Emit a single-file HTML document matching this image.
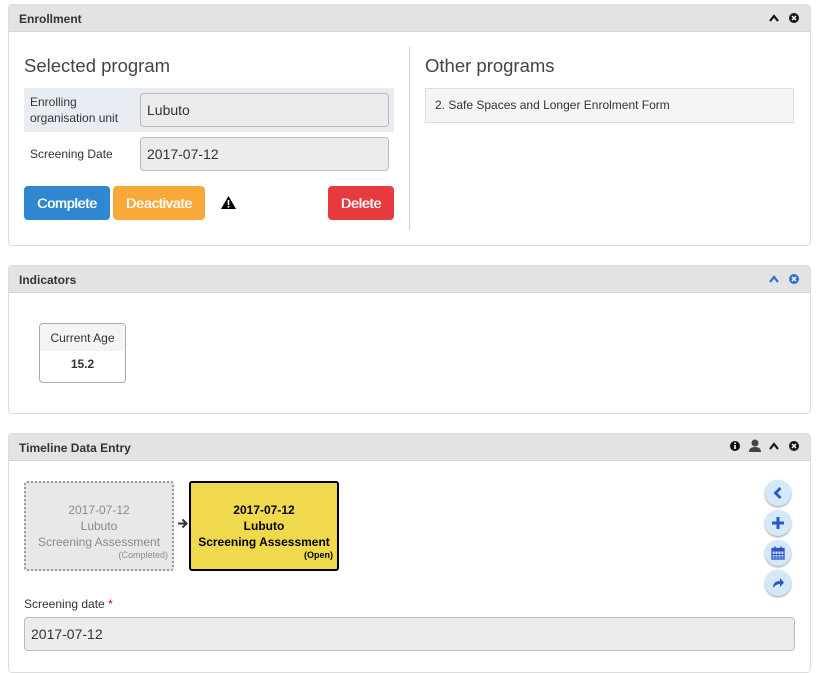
<!DOCTYPE html>
<html><head><style>
*{box-sizing:border-box;margin:0;padding:0}
body{width:824px;height:658px;overflow:hidden;background:#fff;font-family:"Liberation Sans",sans-serif;color:#333;position:relative}
.p{position:absolute;left:8px;width:803px;border:1px solid #ddd;border-radius:4px;background:#fff}
.h{height:27px;background:#e3e3e3;border-bottom:1px solid #d4d4d4;font-weight:bold;font-size:12px;padding:7px 10px;color:#333}
.a{position:absolute}
.inp{position:absolute;background:#ececec;border:1px solid #bbb;border-radius:4px;font-size:14px;padding:0 6px;display:flex;align-items:center;color:#333}
.btn{position:absolute;height:34px;border-radius:4px;color:#fff;font-size:14px;display:flex;align-items:center;justify-content:center;text-shadow:0.6px 0 0 #fff}
.circ{position:absolute;left:765px;width:26px;height:26px;border-radius:50%;background:#d3e9f9;box-shadow:0 1px 2px #999;display:flex;align-items:center;justify-content:center}
</style></head><body>
<div class="p" style="top:4px;height:242px">
 <div class="h">Enrollment</div>
</div>
<svg class="a" style="left:768px;top:12px" width="32" height="12"><path d="M2 9 L6 4 L10 9" stroke="#111" stroke-width="2.2" fill="none"/><circle cx="26" cy="6" r="5" fill="#111"/><path d="M24 4 L28 8 M28 4 L24 8" stroke="#fff" stroke-width="1.5"/></svg>
<div class="a" style="left:24px;top:55px;font-size:18.5px;color:#444">Selected program</div>
<div class="a" style="left:24px;top:88px;width:370px;height:44px;background:#e8edf4"></div>
<div class="a" style="left:30px;top:94px;font-size:12px;line-height:16px">Enrolling<br>organisation unit</div>
<div class="inp" style="left:140px;top:93px;width:249px;height:34px">Lubuto</div>
<div class="a" style="left:30px;top:147px;font-size:12px">Screening Date</div>
<div class="inp" style="left:140px;top:137px;width:249px;height:34px">2017-07-12</div>
<div class="btn" style="left:24px;top:186px;width:86px;background:#2f87cf">Complete</div>
<div class="btn" style="left:113px;top:186px;width:92px;background:#f9a93a">Deactivate</div>
<svg class="a" style="left:221px;top:196px" width="15" height="13"><path d="M7.5 0 L15 13 L0 13Z" fill="#000"/><rect x="6.7" y="4" width="1.6" height="5" fill="#fff"/><rect x="6.7" y="10" width="1.6" height="1.6" fill="#fff"/></svg>
<div class="btn" style="left:328px;top:186px;width:66px;background:#e83b3f">Delete</div>
<div class="a" style="left:409px;top:47px;width:1px;height:183px;background:#ccc"></div>
<div class="a" style="left:425px;top:55px;font-size:18.5px;color:#444">Other programs</div>
<div class="a" style="left:425px;top:88px;width:369px;height:35px;background:#f5f5f5;border:1px solid #ddd;font-size:12px;padding:9px 9px">2. Safe Spaces and Longer Enrolment Form</div>

<div class="p" style="top:265px;height:149px"><div class="h">Indicators</div></div>
<svg class="a" style="left:768px;top:273px" width="32" height="12"><path d="M2 9 L6 4 L10 9" stroke="#2f6fd0" stroke-width="2.2" fill="none"/><circle cx="26" cy="6" r="5" fill="#2f6fd0"/><path d="M24 4 L28 8 M28 4 L24 8" stroke="#fff" stroke-width="1.5"/></svg>
<div class="a" style="left:39px;top:323px;width:87px;height:60px;border:1px solid #aaa;border-radius:4px;overflow:hidden">
 <div style="background:#f4f4f4;height:27px;font-size:12px;text-align:center;padding-top:7px">Current Age</div>
 <div style="font-size:12px;font-weight:bold;text-align:center;padding-top:6px">15.2</div>
</div>

<div class="p" style="top:433px;height:240px"><div class="h">Timeline Data Entry</div></div>
<svg class="a" style="left:729px;top:439px" width="72" height="14"><circle cx="6" cy="7" r="5" fill="#111"/><rect x="5.2" y="6" width="1.6" height="4" fill="#fff"/><rect x="5.2" y="3.5" width="1.6" height="1.5" fill="#fff"/><circle cx="26" cy="4" r="3.5" fill="#444"/><path d="M20 13 Q20 8 26 8 Q32 8 32 13Z" fill="#444"/><path d="M41 10 L45 5 L49 10" stroke="#111" stroke-width="2.2" fill="none"/><circle cx="65" cy="7" r="5" fill="#111"/><path d="M63 5 L67 9 M67 5 L63 9" stroke="#fff" stroke-width="1.5"/></svg>
<div class="a" style="left:24px;top:481px;width:150px;height:90px;background:#e8e8e8;border:2px dotted #999;border-radius:3px;color:#8a8a8a;font-size:12px;text-align:center;line-height:16px;padding-top:19px">2017-07-12<br>Lubuto<br>Screening Assessment<div style="text-align:right;font-size:9px;line-height:11px;padding-right:4px">(Completed)</div></div>
<svg class="a" style="left:177px;top:518px" width="12" height="11"><path d="M1 5.5 H9 M5.5 1.5 L9.5 5.5 L5.5 9.5" stroke="#333" stroke-width="2" fill="none"/></svg>
<div class="a" style="left:189px;top:481px;width:150px;height:90px;background:#f0d94d;border:2px solid #000;border-radius:3px;color:#000;font-weight:bold;font-size:12px;text-align:center;line-height:16px;padding-top:19px">2017-07-12<br>Lubuto<br>Screening Assessment<div style="text-align:right;font-size:9px;line-height:11px;padding-right:4px">(Open)</div></div>
<div class="circ" style="top:480px"><svg width="12" height="14"><path d="M8.5 2 L3.5 7 L8.5 12" stroke="#2f55c8" stroke-width="2.8" fill="none"/></svg></div>
<div class="circ" style="top:510px"><svg width="14" height="14"><path d="M7 1 V13 M1 7 H13" stroke="#2f55c8" stroke-width="3"/></svg></div>
<div class="circ" style="top:540px"><svg width="14" height="14"><rect x="1" y="2.5" width="12" height="10.5" fill="none" stroke="#2f55c8" stroke-width="1.3"/><rect x="1" y="2.5" width="12" height="3" fill="#2f55c8"/><path d="M1 8.5 H13 M1 11 H13 M4 5 V13 M7 5 V13 M10 5 V13" stroke="#2f55c8" stroke-width="0.9"/><rect x="3.3" y="0.5" width="1.5" height="3" fill="#2f55c8"/><rect x="9.3" y="0.5" width="1.5" height="3" fill="#2f55c8"/></svg></div>
<div class="circ" style="top:570px"><svg width="14" height="14"><path d="M2 12 Q2 5 9 5 V2 L13 6.5 L9 11 V8 Q5 8 2 12Z" fill="#2f55c8"/></svg></div>
<div class="a" style="left:24px;top:597px;font-size:12px">Screening date <span style="color:#d00">*</span></div>
<div class="inp" style="left:24px;top:617px;width:771px;height:34px">2017-07-12</div>
</body></html>
